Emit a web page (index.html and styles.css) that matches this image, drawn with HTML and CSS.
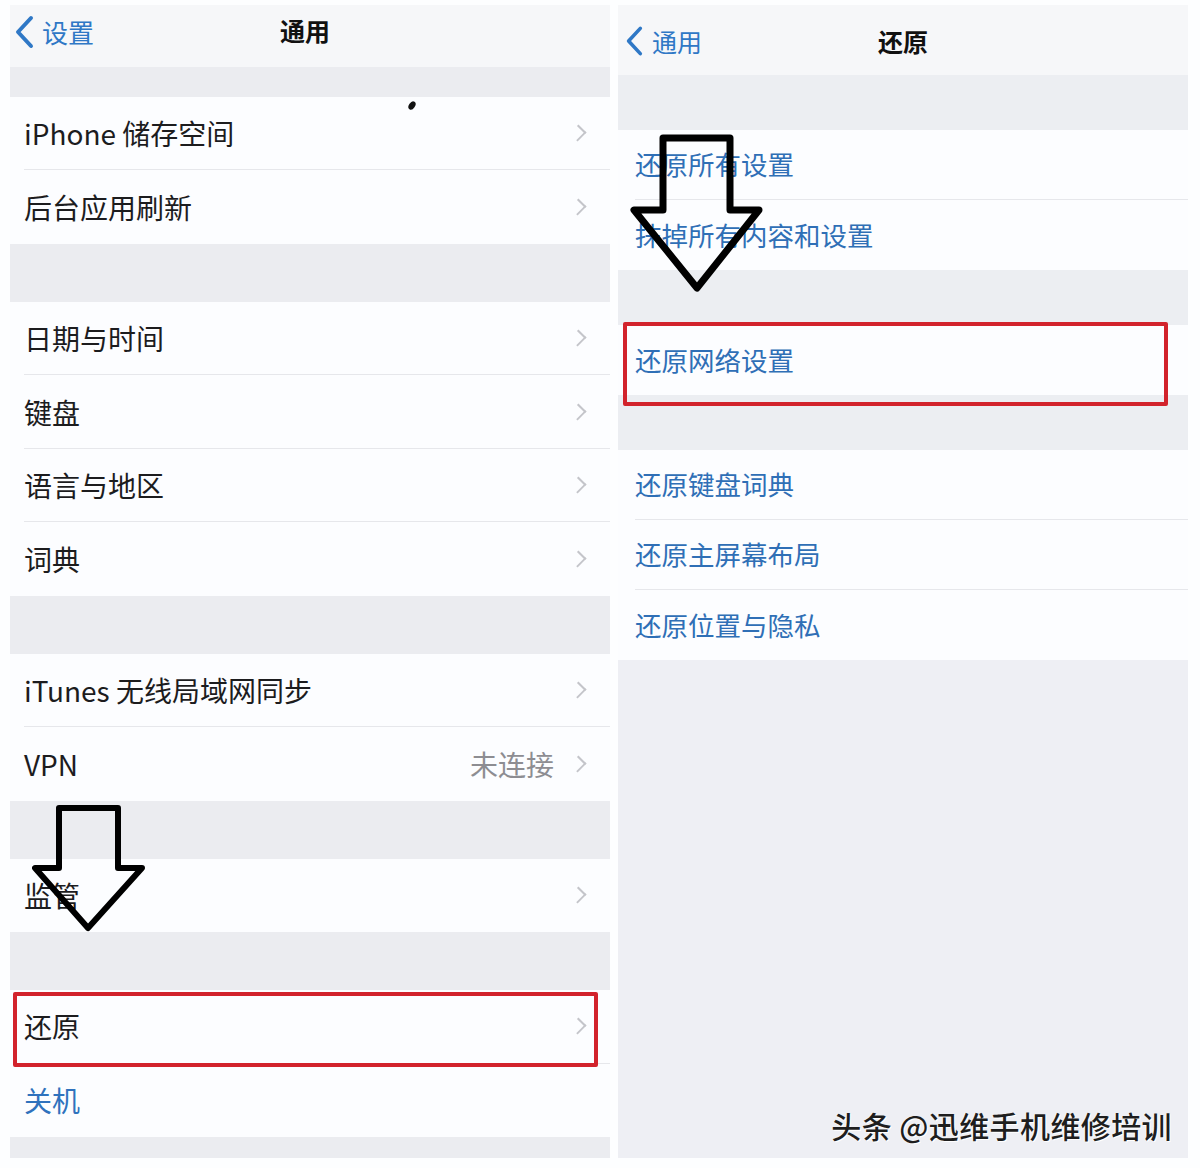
FILE: index.html
```html
<!DOCTYPE html>
<html lang="zh-CN">
<head>
  <meta charset="UTF-8" />
  <meta name="viewport" content="width=device-width, initial-scale=1.0"/>
  <title>通用 / 还原</title>
  <link rel="stylesheet" href="styles.css">
</head>
<body>
  <div class="screens">
    <!-- left screen: 通用 -->
    <section class="panel panel-left">
      <header class="nav nav-left">
        <a class="back">
          <svg class="back-icon" viewBox="0 0 20 34" width="20" height="34"><polyline points="17,3 4,17 17,31" /></svg>
          <span>设置</span>
        </a>
        <h1 class="nav-title">通用</h1>
      </header>

      <div class="gap gap-first"></div>
      <ul class="group">
        <li class="row">iPhone 储存空间<span class="chev"></span></li>
        <li class="row">后台应用刷新<span class="chev"></span></li>
      </ul>

      <div class="gap"></div>
      <ul class="group">
        <li class="row">日期与时间<span class="chev"></span></li>
        <li class="row">键盘<span class="chev"></span></li>
        <li class="row">语言与地区<span class="chev"></span></li>
        <li class="row">词典<span class="chev"></span></li>
      </ul>

      <div class="gap"></div>
      <ul class="group">
        <li class="row">iTunes 无线局域网同步<span class="chev"></span></li>
        <li class="row">VPN<span class="value">未连接</span><span class="chev"></span></li>
      </ul>

      <div class="gap"></div>
      <ul class="group">
        <li class="row">监管<span class="chev"></span></li>
      </ul>

      <div class="gap"></div>
      <ul class="group">
        <li class="row row-marked">还原<span class="chev"></span><span class="mark mark-left"></span></li>
        <li class="row row-blue">关机</li>
      </ul>
      <div class="gap gap-last"></div>

      <span class="speck"></span>
      <svg class="arrow arrow-left" viewBox="0 0 120 130" width="120" height="130">
        <polygon points="27,3 86,3 86,63 110,63 56,123 3,63 27,63" />
      </svg>
    </section>

    <!-- right screen: 还原 -->
    <section class="panel panel-right">
      <header class="nav nav-right">
        <a class="back">
          <svg class="back-icon" viewBox="0 0 20 34" width="18" height="32"><polyline points="17,3 4,17 17,31" /></svg>
          <span>通用</span>
        </a>
        <h1 class="nav-title">还原</h1>
      </header>

      <div class="gap gap-r"></div>
      <ul class="group">
        <li class="row row-r">还原所有设置</li>
        <li class="row row-r">抹掉所有内容和设置</li>
      </ul>

      <div class="gap gap-r"></div>
      <ul class="group">
        <li class="row row-r row-marked">还原网络设置<span class="mark mark-right"></span></li>
      </ul>

      <div class="gap gap-r"></div>
      <ul class="group">
        <li class="row row-r">还原键盘词典</li>
        <li class="row row-r">还原主屏幕布局</li>
        <li class="row row-r">还原位置与隐私</li>
      </ul>
      <div class="fill"></div>

      <svg class="arrow arrow-right" viewBox="0 0 136 162" width="136" height="162">
        <polygon points="35,6 102,6 102,78 131,78 69,156 6,78 35,78" />
      </svg>
      <p class="watermark">头条 @迅维手机维修培训</p>
    </section>
  </div>
</body>
</html>
```

FILE: styles.css
```css
* {
  box-sizing: border-box;
}

body {
  margin: 0;
  background: #fdfeff;
  font-family: "Noto Sans CJK SC", "Noto Sans", sans-serif;
  color: #1c1c1e;
}

.screens {
  display: flex;
  gap: 8px;
  padding: 5px 12px 0 10px;
  height: 1168px;
}

.panel {
  position: relative;
  display: flex;
  flex-direction: column;
  height: 1153px;
}

.panel-left {
  width: 600px;
}

.panel-right {
  width: 570px;
}

/* nav bar */
.nav {
  position: relative;
  display: flex;
  align-items: center;
  background: #f6f7f9;
}

.nav-left {
  height: 62px;
  padding-left: 4px;
  padding-bottom: 8px;
}

.nav-right {
  height: 70px;
  padding-left: 7px;
  padding-top: 2px;
}

.back {
  display: flex;
  align-items: center;
  gap: 8px;
  color: #2f78c6;
  font-size: 26px;
}

.nav-right .back {
  font-size: 25px;
  gap: 9px;
}

.back-icon polyline {
  fill: none;
  stroke: #2f78c6;
  stroke-width: 4;
  stroke-linecap: round;
  stroke-linejoin: round;
}

.nav-title {
  position: absolute;
  left: 0;
  right: 0;
  margin: 0;
  text-align: center;
  font-size: 25px;
  font-weight: 700;
  color: #111;
  pointer-events: none;
}

.nav-left .nav-title {
  top: 7px;
  padding-right: 10px;
}

/* grouped list */
.gap {
  height: 58px;
  background: #ebecf0;
}

.gap-first {
  height: 30px;
}

.gap-last {
  height: 21px;
}

.gap-r {
  height: 55px;
  background: #eceef2;
}

.group {
  list-style: none;
  margin: 0;
  padding: 0;
  background: #fcfdff;
}

.row {
  position: relative;
  display: flex;
  align-items: center;
  height: 73.5px;
  margin-left: 14px;
  padding-right: 22px;
  font-size: 28px;
  line-height: 1;
  border-bottom: 1px solid #e6e7eb;
}

.row:last-child {
  border-bottom: none;
}

.row-blue {
  color: #2f72bd;
}

.row-r {
  height: 70px;
  margin-left: 17px;
  font-size: 26.5px;
  color: #2f6fb6;
}

.value {
  margin-left: auto;
  margin-right: 18px;
  color: #8d8d92;
}

.chev {
  margin-left: auto;
  width: 12px;
  height: 12px;
  margin-right: 4px;
  border-right: 2px solid #c4c5ca;
  border-top: 2px solid #c4c5ca;
  transform: rotate(45deg) scale(0.95, 1.05);
}

.value + .chev {
  margin-left: 0;
}

/* red highlight boxes */
.mark {
  position: absolute;
  border: 4px solid #d2232c;
  border-radius: 2px;
  pointer-events: none;
}

.mark-left {
  left: -11px;
  top: 2px;
  width: 585px;
  height: 75px;
}

.mark-right {
  left: -12px;
  top: -3px;
  width: 545px;
  height: 84px;
}

.fill {
  flex: 1;
  background: #eeeff4;
}

/* hand drawn arrows */
.arrow {
  position: absolute;
}

.arrow polygon {
  fill: none;
  stroke: #000;
  stroke-width: 6;
  stroke-linejoin: round;
}

.arrow-left {
  left: 22px;
  top: 800px;
}

.arrow-right {
  left: 10px;
  top: 127px;
}

.arrow-right polygon {
  stroke-width: 7;
}

.speck {
  position: absolute;
  left: 399px;
  top: 96px;
  width: 6px;
  height: 9px;
  border-radius: 50%;
  background: #111;
  transform: rotate(35deg);
}

.watermark {
  position: absolute;
  right: 16px;
  bottom: 11px;
  margin: 0;
  font-size: 30px;
  font-weight: 500;
  color: #1e1e1e;
  text-shadow: 1px 1px 0 #fff, -1px 0 0 rgba(255, 255, 255, 0.6);
  letter-spacing: 0.4px;
}
```
